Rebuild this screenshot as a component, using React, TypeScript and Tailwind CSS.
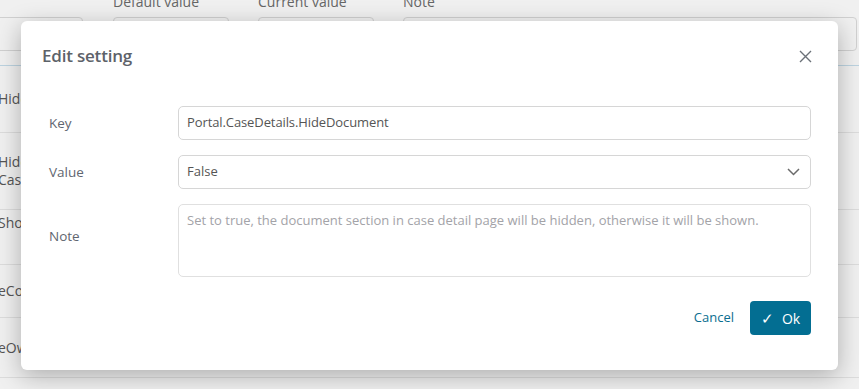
import React from "react";

const font = { fontFamily: '"Open Sans", "Noto Sans", sans-serif' };

function BgRow({ lines, h }: { lines: string[]; h: string }) {
  return (
    <div className={`flex flex-col justify-center border-b border-[#dcdcdc] pl-0 ${h}`}>
      {lines.map((l, i) => (
        <div key={i} className="text-[14px] leading-[18px] text-[#555] -ml-[2px]">{l}</div>
      ))}
    </div>
  );
}

export default function App() {
  return (
    <div className="relative w-[859px] h-[389px] overflow-hidden bg-[#f0f0f0]" style={font}>
      {/* background page */}
      <div className="flex flex-col">
        <div className="relative h-[66px] border-b border-[#bcd3e0]">
          <div className="absolute left-[113px] -top-[9px] text-[14px] text-[#666]">Default value</div>
          <div className="absolute left-[258px] -top-[9px] text-[14px] text-[#666]">Current value</div>
          <div className="absolute left-[403px] -top-[9px] text-[14px] text-[#666]">Note</div>
          <div className="absolute left-[-10px] top-[17px] w-[93px] h-[34px] rounded border border-[#d0d0d0]" />
          <div className="absolute left-[113px] top-[17px] w-[116px] h-[34px] rounded border border-[#d0d0d0]" />
          <div className="absolute left-[258px] top-[17px] w-[116px] h-[34px] rounded border border-[#d0d0d0]" />
          <div className="absolute left-[403px] top-[17px] w-[454px] h-[34px] rounded border border-[#d0d0d0]" />
        </div>
        <BgRow lines={["Hide"]} h="h-[67px]" />
        <BgRow lines={["Hide", "Case"]} h="h-[77px]" />
        <BgRow lines={["Show"]} h="h-[55px] justify-start pt-[4px]" />
        <BgRow lines={["eCo"]} h="h-[53px]" />
        <BgRow lines={["eOw"]} h="h-[60px]" />
      </div>

      {/* modal */}
      <div className="absolute left-[21px] top-[21px] w-[817px] h-[349px] bg-white rounded-[6px] shadow-[0_6px_24px_rgba(0,0,0,0.28)] flex flex-col">
        <div className="flex items-center justify-between pl-[21px] pr-[26px] h-[68px] pt-[1px]">
          <div className="text-[17px] font-semibold tracking-[-0.2px] text-[#5d6269]">Edit setting</div>
          <svg width="13" height="13" viewBox="0 0 13 13" className="mt-[2px]">
            <path d="M1 1 L12 12 M12 1 L1 12" stroke="#6b7178" strokeWidth="1.4" />
          </svg>
        </div>
        <div className="flex flex-col gap-[15px] pl-[28px] pr-[27px] pt-[17px]">
          <div className="flex items-center">
            <div className="w-[129px] text-[13.5px] text-[#5f6670]">Key</div>
            <div className="flex-1 h-[34px] rounded-[5px] border border-[#d6d6d6] flex items-center px-[8px] text-[13px] tracking-[-0.1px] text-[#555]">
              Portal.CaseDetails.HideDocument
            </div>
          </div>
          <div className="flex items-center">
            <div className="w-[129px] text-[13.5px] text-[#5f6670]">Value</div>
            <div className="flex-1 h-[34px] rounded-[5px] border border-[#d6d6d6] flex items-center justify-between pl-[8px] pr-[10px] text-[13px] text-[#555]">
              <span>False</span>
              <svg width="13" height="8" viewBox="0 0 13 8">
                <path d="M1 1 L6.5 6.5 L12 1" stroke="#6b6b6b" strokeWidth="1.5" fill="none" />
              </svg>
            </div>
          </div>
          <div className="flex items-center">
            <div className="w-[129px] text-[13.5px] text-[#5f6670] -mt-[8px]">Note</div>
            <div className="flex-1 h-[73px] rounded-[5px] border border-[#e0e0e0] px-[8px] pt-[6px] text-[13px] text-[#a3a3a8]">
              Set to true, the document section in case detail page will be hidden, otherwise it will be shown.
            </div>
          </div>
        </div>
        <div className="flex items-center justify-end gap-[16px] pr-[27px] pt-[24px]">
          <span className="text-[13px] text-[#0a6e90]">Cancel</span>
          <div className="h-[34px] w-[61px] rounded-[4px] bg-[#036e92] flex items-center justify-center gap-[8px] text-white text-[14px]">
            <span className="text-[15px]">✓</span>
            <span>Ok</span>
          </div>
        </div>
      </div>
    </div>
  );
}
